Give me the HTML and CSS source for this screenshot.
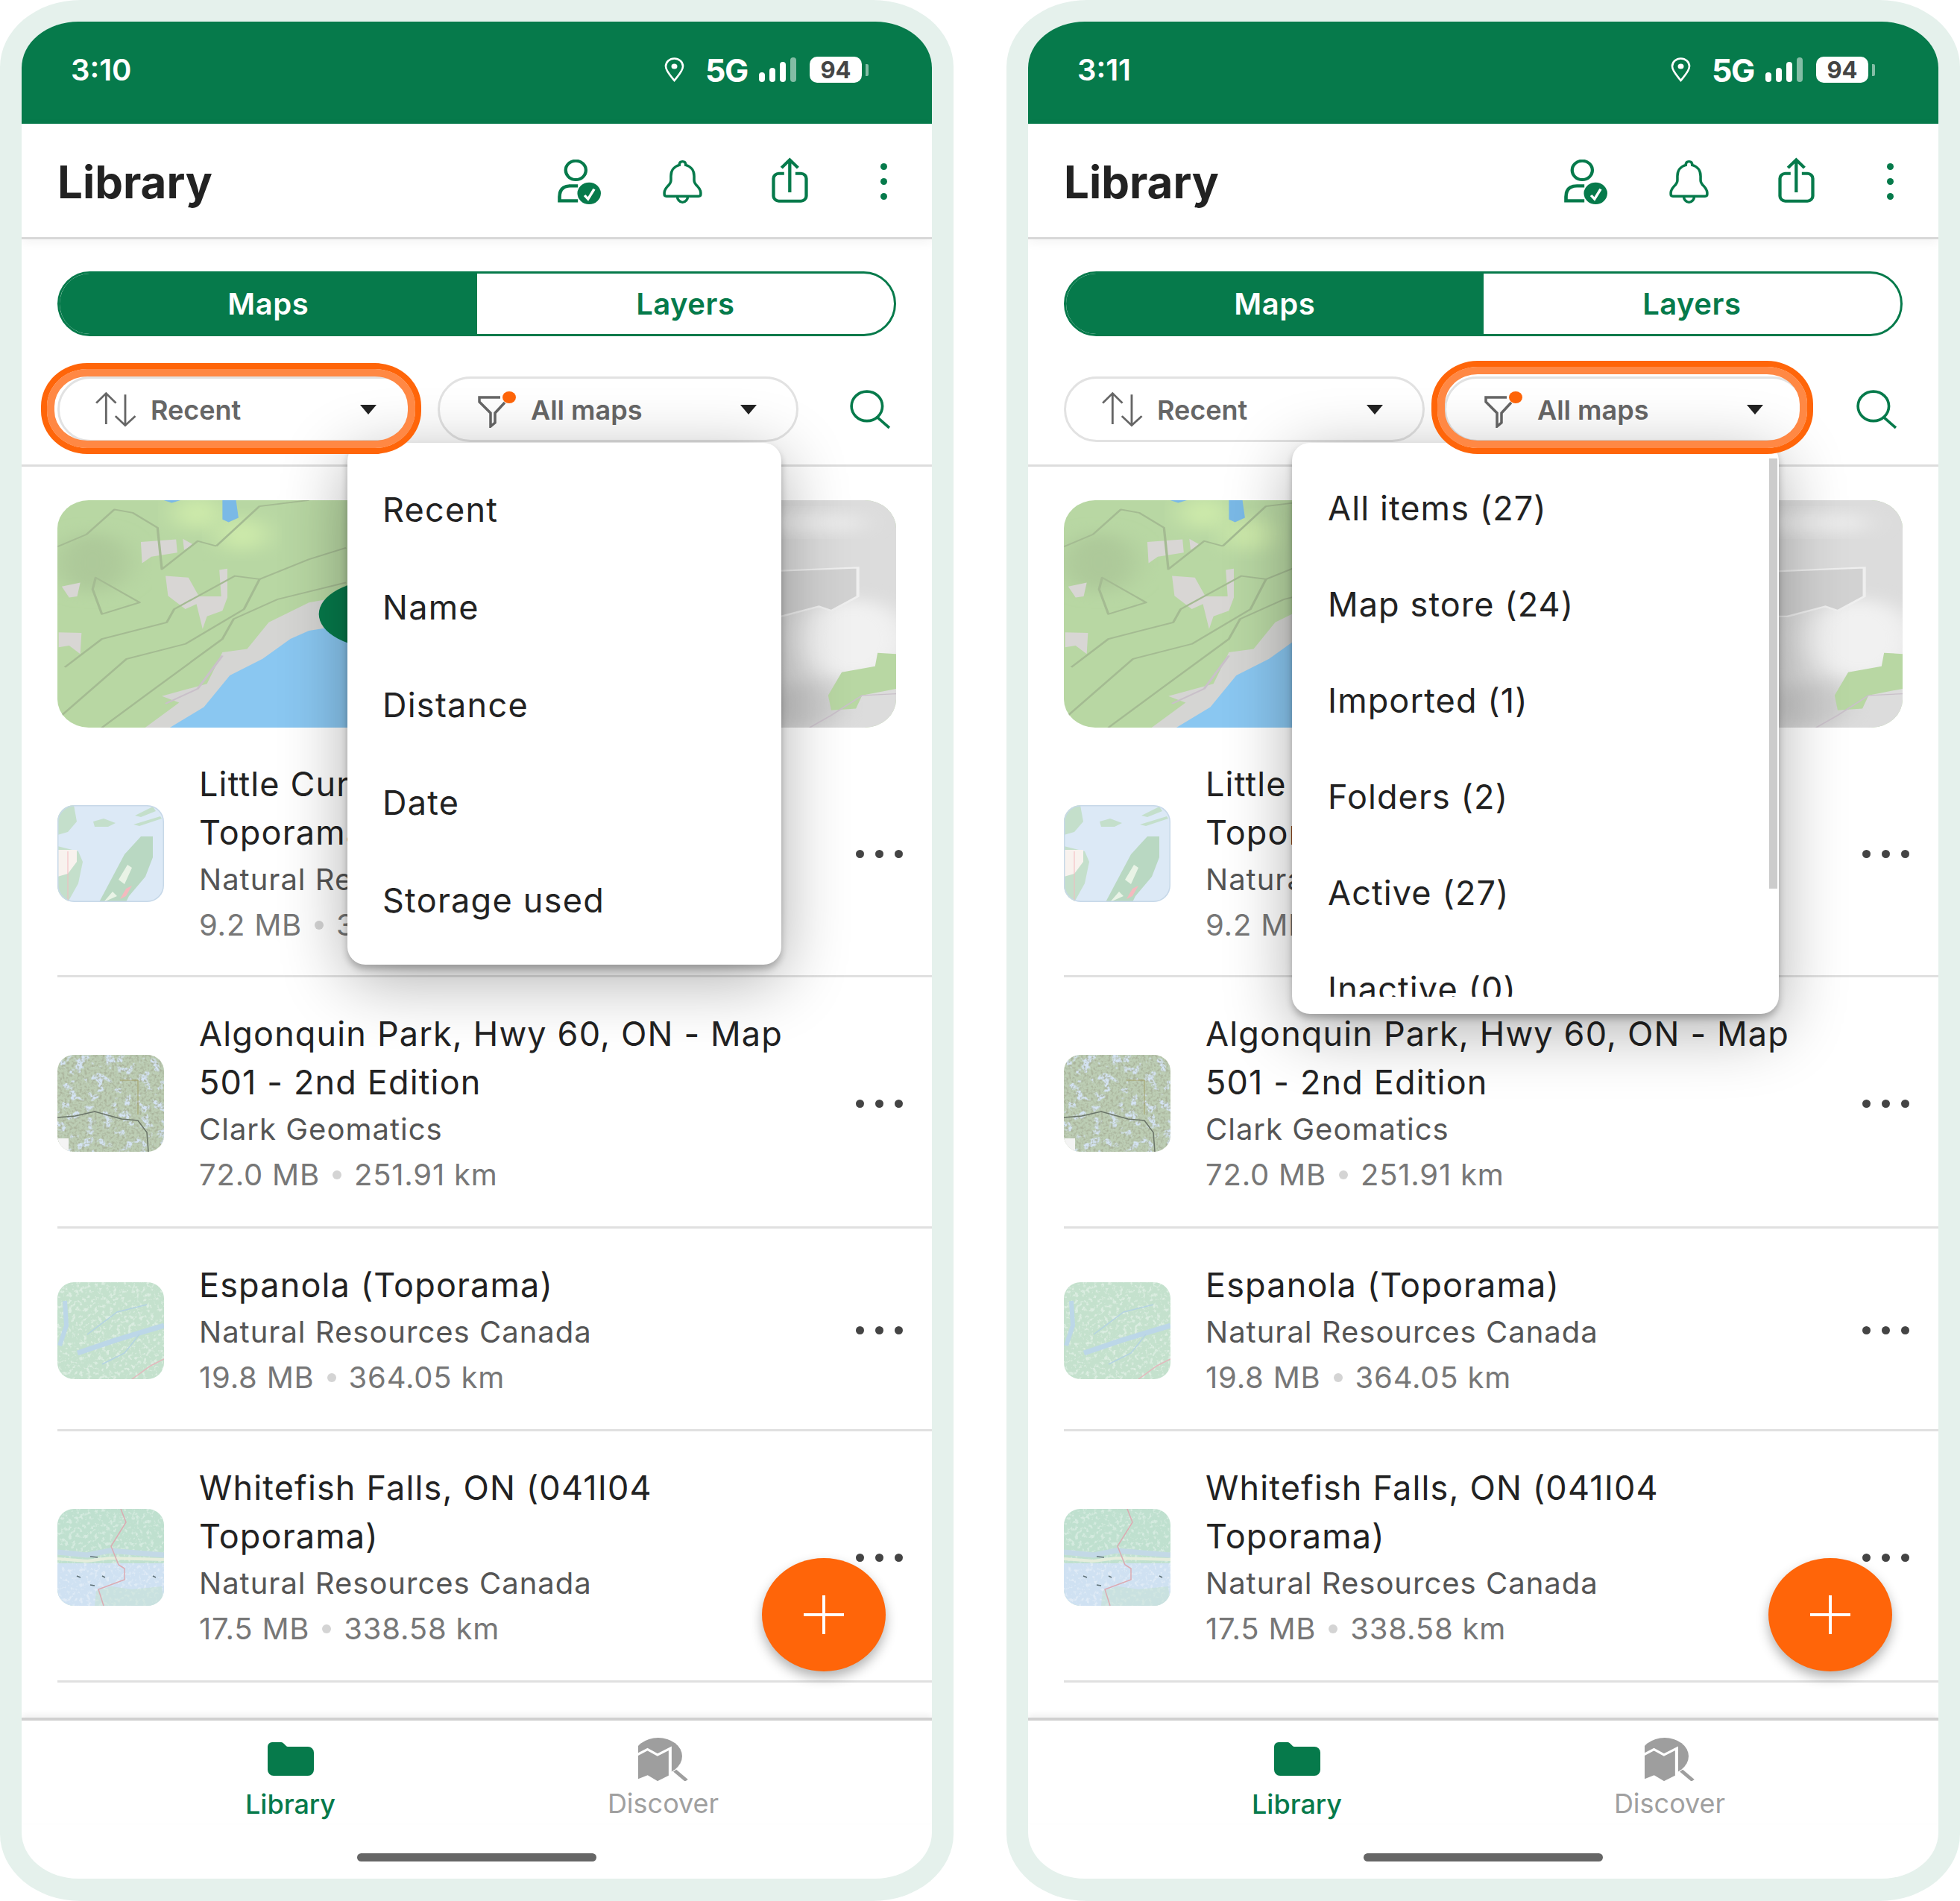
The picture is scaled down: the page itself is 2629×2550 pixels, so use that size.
FILE: index.html
```html
<!DOCTYPE html>
<html lang="en">

<head>
    <meta charset="UTF-8">
    <title>Library</title>
    <link rel="stylesheet" href="styles.css">
</head>

<body>

    <!-- shared drawings, used by both phones -->
    <svg class="defs" aria-hidden="true">
        <defs>
            <filter id="fineNoise" x="0" y="0" width="100%" height="100%">
                <feTurbulence type="fractalNoise" baseFrequency="0.3" numOctaves="2" seed="4" />
                <feColorMatrix values="0 0 0 0 .4  0 0 0 0 .45  0 0 0 0 .33  3 0 0 0 -1.3" />
            </filter>
            <filter id="lightNoise" x="0" y="0" width="100%" height="100%">
                <feTurbulence type="fractalNoise" baseFrequency="0.2" numOctaves="3" seed="9" />
                <feColorMatrix values="0 0 0 0 1  0 0 0 0 1  0 0 0 0 1  5 0 0 0 -2.6" />
            </filter>
            <filter id="waterNoise" x="0" y="0" width="100%" height="100%">
                <feTurbulence type="fractalNoise" baseFrequency="0.08" numOctaves="3" seed="12" />
                <feColorMatrix values="0 0 0 0 .66  0 0 0 0 .77  0 0 0 0 .9  9 0 0 0 -5" />
            </filter>
            <filter id="soft" x="-30%" y="-30%" width="160%" height="160%">
                <feGaussianBlur stdDeviation="22" />
            </filter>

            <symbol id="banner" viewBox="93 112 1357 685" preserveAspectRatio="none">
                <rect x="93" y="112" width="1357" height="685" fill="#b8d7a3" />
                <ellipse cx="320" cy="150" rx="40" ry="50" fill="#cdeaaa" filter="url(#soft)" />
                <ellipse cx="392" cy="215" rx="40" ry="50" fill="#cdeaaa" filter="url(#soft)" />
                <ellipse cx="150" cy="300" rx="60" ry="90" fill="#adc99a" filter="url(#soft)" />

                <path d="M235 797 L290 722 L262 702 L335 665 L360 570 L400 560 L435 480 L500 420 L620 380 L1000 380 V797Z" fill="#d5d5d3" />
                <path d="M275 797 L330 735 L372 640 L425 590 L470 530 L500 505 L620 470 L1000 470 V797Z" fill="#8ac7f1" />
                <path d="M360 112 L382 112 L386 165 L370 178 L360 170Z" fill="#7ab9e6" />
                <path d="M265 112 H292 L278 120Z" fill="#7ab9e6" />

                <g fill="#d8d6d4">
                    <path d="M228 238 L285 230 L287 270 L245 282 L230 302Z" />
                    <path d="M296 228 L313 246 L298 262Z" />
                    <path d="M268 340 L305 345 L322 402 L358 402 L355 322 L368 318 L368 405 L360 445 L335 462 L328 500 L318 425 L300 440 L272 400Z" />
                    <path d="M100 372 L130 360 L125 402 L112 405Z" />
                    <path d="M95 510 L132 512 L130 575 L112 550 L95 555Z" />
                </g>

                <g fill="none" stroke="#a4bb92" stroke-width="4" stroke-linejoin="round">
                    <path d="M93 252 L140 215 L185 140 L215 150 L255 195 L262 320 L320 235 L350 250" />
                    <path d="M105 615 L165 530 L270 480 L282 440 L380 340 L420 350 L500 290 L560 255" />
                    <path d="M100 760 L205 590 L300 545 L395 440 L420 350" />
                    <path d="M165 797 L250 680 L360 530 L378 470 L450 410 L560 360" />
                    <path d="M155 345 L226 420 L165 455 L150 380Z" />
                    <path d="M350 250 L420 130 L500 112" />
                    <path d="M268 725 L320 680 L360 580" stroke="#c9c0c9" />
                </g>

                <rect x="1000" y="112" width="450" height="685" fill="#dcdcdc" />
                <ellipse cx="1380" cy="530" rx="90" ry="120" fill="#f1f1f1" filter="url(#soft)" />
                <ellipse cx="1300" cy="180" rx="100" ry="30" fill="#ededed" filter="url(#soft)" />
                <ellipse cx="1300" cy="730" rx="60" ry="70" fill="#cbcbcb" filter="url(#soft)" />
                <path d="M1000 345 L1388 315 V402 L1345 445 L1325 432 L1264 462 H1000Z" fill="#d2d2d2" stroke="#efefef" stroke-width="5" />
                <path d="M1450 575 L1420 572 L1416 612 L1362 630 L1340 700 L1345 745 L1385 740 L1395 700 L1450 680Z" fill="#b8d7a3" />
                <path d="M1310 797 L1345 760 L1395 700 L1450 695" fill="none" stroke="#c9c0c9" stroke-width="3" />

                <circle cx="620" cy="455" r="104" fill="#067a4b" />
            </symbol>

            <symbol id="thumbLake" viewBox="0 0 143 130" preserveAspectRatio="none">
                <rect width="143" height="130" fill="#dce9f6" />
                <path d="M0 0 H22 L26 22 L14 36 L0 40Z" fill="#c4dfcb" />
                <path d="M48 22 L62 18 L78 24 L68 29 L50 29Z" fill="#c4dfcb" />
                <path d="M104 14 L128 2 L132 8 L112 16Z M102 26 L138 15 L140 18 L110 28Z" fill="#c4dfcb" />
                <path d="M0 55 L28 62 L34 76 L28 105 L14 130 H0Z" fill="#c4dfcb" />
                <path d="M0 60 H26 V76 L14 92 L0 96Z" fill="#f8f2ee" />
                <path d="M56 130 L90 66 L112 42 L128 42 L128 70 L118 96 L96 122 L92 130Z" fill="#b9d8c2" />
                <path d="M84 126 L92 112 L100 108 L92 122Z" fill="#f4b9be" />
                <path d="M82 100 L94 80 L100 84 L90 106Z M62 130 L74 116 L80 122Z" fill="#e9f3e6" />
                <path d="M14 62 V130" stroke="#f4b9be" stroke-width="1" />
                <rect x="0.75" y="0.75" width="141.5" height="128.5" rx="22" fill="none" stroke="#c7d8e8" stroke-width="1.5" />
            </symbol>

            <symbol id="thumbDense" viewBox="0 0 143 130" preserveAspectRatio="none">
                <rect width="143" height="130" fill="#bccdb4" />
                <rect width="143" height="130" filter="url(#waterNoise)" />
                <rect width="143" height="130" filter="url(#fineNoise)" />
                <path d="M0 84 L24 82 L50 76 L86 86 L108 88 L120 104 L122 130" fill="none" stroke="#6a7468" stroke-width="1.5" />
                <path d="M84 34 H108 V80" fill="none" stroke="#a19c62" stroke-width="1" />
                <rect x="0" y="112" width="15" height="18" fill="#f4f4f4" />
            </symbol>

            <symbol id="thumbPale" viewBox="0 0 143 130" preserveAspectRatio="none">
                <rect width="143" height="130" fill="#c4e1cd" />
                <rect width="143" height="130" filter="url(#lightNoise)" opacity=".4" />
                <path d="M27 95 L77 78 L143 58" fill="none" stroke="#bcd7e8" stroke-width="7" />
                <path d="M3 85 L12 58 L10 25" fill="none" stroke="#bcd7e8" stroke-width="6" />
                <path d="M40 70 L80 40 L120 30 M60 110 L90 95 L110 70" fill="none" stroke="#b4d3e2" stroke-width="1.5" />
                <path d="M100 130 L125 112 L143 103" fill="none" stroke="#e3b8bd" stroke-width="1.5" />
            </symbol>

            <symbol id="thumbMixed" viewBox="0 0 143 130" preserveAspectRatio="none">
                <rect width="143" height="130" fill="#bfe0cf" />
                <rect y="73" width="143" height="57" fill="#cfe1f2" />
                <rect width="143" height="130" filter="url(#lightNoise)" opacity=".35" />
                <path d="M0 58 L40 62 L70 56 L143 62" stroke="#c3d9e6" stroke-width="7" fill="none" />
                <path d="M0 67 L40 70 L70 66 L143 68" stroke="#e4eddc" stroke-width="4" fill="none" />
                <path d="M50 130 L52 110 L72 104 L100 108 L140 104 L143 130Z" fill="#c4e1cd" opacity=".5" />
                <path d="M85 0 L92 18 L72 50 L82 75 L90 80 L90 95 L55 108 L62 130" fill="none" stroke="#dcaab2" stroke-width="1.5" />
                <path d="M26 90 L31 92 M44 102 L50 103 M60 90 L64 92 M128 90 L132 92 M44 64 L54 65" stroke="#5e7076" stroke-width="1.5" />
            </symbol>

            <symbol id="iconPerson" viewBox="190 100 165 180" preserveAspectRatio="none">
                <circle cx="258" cy="143" r="38" fill="none" stroke="currentColor" stroke-width="12" />
                <path d="M266 206 H238 Q197 206 197 250 V266 H266" fill="none" stroke="currentColor" stroke-width="13" />
                <circle cx="308" cy="236" r="44" fill="currentColor" />
                <path d="M291 244 L304 259 L327 219" fill="none" stroke="#fff" stroke-width="10" />
            </symbol>

            <symbol id="iconBell" viewBox="585 103 150 172" preserveAspectRatio="none">
                <path d="M660 108 c-8 0-12 6-12 14 c-22 6-32 24-32 44 v16 c0 22-25 26-25 50 v6 c0 6 3 8 8 8 h122 c5 0 8-2 8-8 v-6 c0-24-25-28-25-50 v-16 c0-20-10-38-32-44 c0-8-4-14-12-14z" fill="none" stroke="currentColor" stroke-width="10" />
                <path d="M640 246 a20 24 0 0 0 40 0" fill="none" stroke="currentColor" stroke-width="10" />
            </symbol>

            <symbol id="iconShare" viewBox="995 90 137 182" preserveAspectRatio="none">
                <path d="M1042 155 H1022 a20 20 0 0 0 -20 20 V245 a20 20 0 0 0 20 20 H1105 a20 20 0 0 0 20-20 V175 a20 20 0 0 0 -20 -20 H1084" fill="none" stroke="currentColor" stroke-width="12" />
                <path d="M1063 230 V100 M1032 132 L1063 100 L1094 132" fill="none" stroke="currentColor" stroke-width="12" />
            </symbol>

            <symbol id="iconSort" viewBox="240 165 160 145" preserveAspectRatio="none">
                <path d="M283 298 V175 M246 212 L283 173 L320 212" fill="none" stroke="currentColor" stroke-width="8" />
                <path d="M355 178 V300 M318 265 L355 303 L393 265" fill="none" stroke="currentColor" stroke-width="8" />
            </symbol>

            <symbol id="iconFilter" viewBox="0 0 60 50">
                <path d="M30 9 H2 V15 L17 30 V48 L23 43 V30 L36 16" fill="none" stroke="currentColor" stroke-width="3.5" />
                <ellipse cx="42" cy="9" rx="9" ry="8" fill="#ff6509" />
            </symbol>

            <symbol id="iconSearch" viewBox="0 0 54 50" preserveAspectRatio="none">
                <ellipse cx="23" cy="21" rx="20" ry="19" fill="none" stroke="currentColor" stroke-width="3.5" />
                <path d="M36 35 L52 49" stroke="currentColor" stroke-width="3.5" />
            </symbol>

            <symbol id="iconPin" viewBox="0 0 27 34">
                <path d="M13.5 31 C8 24 2 18 2 12 A11.5 10.5 0 0 1 25 12 C25 18 19 24 13.5 31Z" fill="none" stroke="currentColor" stroke-width="2.6" />
                <ellipse cx="13.5" cy="12" rx="4" ry="3.6" fill="currentColor" />
            </symbol>

            <symbol id="iconFolder" viewBox="0 0 62 45" preserveAspectRatio="none">
                <path d="M6 0 H18 C22 0 24 6 27 6 H54 A8 8 0 0 1 62 14 V37 A8 8 0 0 1 54 45 H8 A8 8 0 0 1 0 37 V6 A6 6 0 0 1 6 0Z" fill="currentColor" />
            </symbol>

            <symbol id="iconDiscover" viewBox="1240 95 150 175" preserveAspectRatio="none">
                <ellipse cx="1300" cy="170" rx="72" ry="75" fill="currentColor" />
                <path d="M1350 228 L1385 268" stroke="currentColor" stroke-width="12" />
                <path d="M1234 166 L1268 142 L1298 164 L1336 138 V250 L1298 276 L1268 252 L1234 270Z" fill="currentColor" stroke="#fff" stroke-width="9" />
            </symbol>
        </defs>
    </svg>

    <div class="page">

        <!-- sort menu open -->
        <div class="phone">
            <div class="screen">
                <div class="status">
                    <span class="clock">3:10</span>
                    <div class="status-right">
                        <svg class="pin"><use href="#iconPin" /></svg>
                        <span class="net">5G</span>
                        <div class="signal"><i class="b1"></i><i class="b2"></i><i class="b3"></i><i class="b4"></i></div>
                        <span class="battery">94</span>
                        <span class="nub"></span>
                    </div>
                </div>

                <header class="header">
                    <h1>Library</h1>
                    <svg class="ic-person"><use href="#iconPerson" /></svg>
                    <svg class="ic-bell"><use href="#iconBell" /></svg>
                    <svg class="ic-share"><use href="#iconShare" /></svg>
                    <div class="kebab"><i></i><i></i><i></i></div>
                </header>

                <div class="segment">
                    <div class="seg on">Maps</div>
                    <div class="seg">Layers</div>
                </div>

                <div class="filters">
                    <div class="pill mark-sort">
                        <svg class="ic-sort"><use href="#iconSort" /></svg>
                        <span>Recent</span>
                        <i class="caret"></i>
                    </div>
                    <div class="pill">
                        <svg class="ic-filter"><use href="#iconFilter" /></svg>
                        <span>All maps</span>
                        <i class="caret"></i>
                    </div>
                    <svg class="ic-search"><use href="#iconSearch" /></svg>
                </div>

                <div class="content">
                    <svg class="banner"><use href="#banner" /></svg>

                    <div class="row first">
                        <svg class="thumb"><use href="#thumbLake" /></svg>
                        <div class="info">
                            <div class="name">Little Current, ON (041I13<br>Toporama)</div>
                            <div class="pub">Natural Resources Canada</div>
                            <div class="meta">9.2 MB<b></b>344.90 km</div>
                        </div>
                        <div class="dots"><i></i><i></i><i></i></div>
                    </div>
                    <div class="row">
                        <svg class="thumb"><use href="#thumbDense" /></svg>
                        <div class="info">
                            <div class="name">Algonquin Park, Hwy 60, ON - Map 501 - 2nd Edition</div>
                            <div class="pub">Clark Geomatics</div>
                            <div class="meta">72.0 MB<b></b>251.91 km</div>
                        </div>
                        <div class="dots"><i></i><i></i><i></i></div>
                    </div>
                    <div class="row">
                        <svg class="thumb"><use href="#thumbPale" /></svg>
                        <div class="info">
                            <div class="name">Espanola (Toporama)</div>
                            <div class="pub">Natural Resources Canada</div>
                            <div class="meta">19.8 MB<b></b>364.05 km</div>
                        </div>
                        <div class="dots"><i></i><i></i><i></i></div>
                    </div>
                    <div class="row">
                        <svg class="thumb"><use href="#thumbMixed" /></svg>
                        <div class="info">
                            <div class="name">Whitefish Falls, ON (041I04 Toporama)</div>
                            <div class="pub">Natural Resources Canada</div>
                            <div class="meta">17.5 MB<b></b>338.58 km</div>
                        </div>
                        <div class="dots"><i></i><i></i><i></i></div>
                    </div>
                </div>

                <nav class="tabs">
                    <div class="tab active">
                        <svg class="ic-folder"><use href="#iconFolder" /></svg>
                        <span>Library</span>
                    </div>
                    <div class="tab">
                        <svg class="ic-discover"><use href="#iconDiscover" /></svg>
                        <span>Discover</span>
                    </div>
                </nav>
                <div class="home"><i></i></div>

                <div class="fab"><i></i></div>

                <div class="menu menu-sort">
                    <div class="item">Recent</div>
                    <div class="item">Name</div>
                    <div class="item">Distance</div>
                    <div class="item">Date</div>
                    <div class="item">Storage used</div>
                </div>
            </div>
        </div>

        <!-- filter menu open -->
        <div class="phone">
            <div class="screen">
                <div class="status">
                    <span class="clock">3:11</span>
                    <div class="status-right">
                        <svg class="pin"><use href="#iconPin" /></svg>
                        <span class="net">5G</span>
                        <div class="signal"><i class="b1"></i><i class="b2"></i><i class="b3"></i><i class="b4"></i></div>
                        <span class="battery">94</span>
                        <span class="nub"></span>
                    </div>
                </div>

                <header class="header">
                    <h1>Library</h1>
                    <svg class="ic-person"><use href="#iconPerson" /></svg>
                    <svg class="ic-bell"><use href="#iconBell" /></svg>
                    <svg class="ic-share"><use href="#iconShare" /></svg>
                    <div class="kebab"><i></i><i></i><i></i></div>
                </header>

                <div class="segment">
                    <div class="seg on">Maps</div>
                    <div class="seg">Layers</div>
                </div>

                <div class="filters">
                    <div class="pill">
                        <svg class="ic-sort"><use href="#iconSort" /></svg>
                        <span>Recent</span>
                        <i class="caret"></i>
                    </div>
                    <div class="pill mark-filter">
                        <svg class="ic-filter"><use href="#iconFilter" /></svg>
                        <span>All maps</span>
                        <i class="caret"></i>
                    </div>
                    <svg class="ic-search"><use href="#iconSearch" /></svg>
                </div>

                <div class="content">
                    <svg class="banner"><use href="#banner" /></svg>

                    <div class="row first">
                        <svg class="thumb"><use href="#thumbLake" /></svg>
                        <div class="info">
                            <div class="name">Little Current, ON (041I13<br>Toporama)</div>
                            <div class="pub">Natural Resources Canada</div>
                            <div class="meta">9.2 MB<b></b>344.90 km</div>
                        </div>
                        <div class="dots"><i></i><i></i><i></i></div>
                    </div>
                    <div class="row">
                        <svg class="thumb"><use href="#thumbDense" /></svg>
                        <div class="info">
                            <div class="name">Algonquin Park, Hwy 60, ON - Map 501 - 2nd Edition</div>
                            <div class="pub">Clark Geomatics</div>
                            <div class="meta">72.0 MB<b></b>251.91 km</div>
                        </div>
                        <div class="dots"><i></i><i></i><i></i></div>
                    </div>
                    <div class="row">
                        <svg class="thumb"><use href="#thumbPale" /></svg>
                        <div class="info">
                            <div class="name">Espanola (Toporama)</div>
                            <div class="pub">Natural Resources Canada</div>
                            <div class="meta">19.8 MB<b></b>364.05 km</div>
                        </div>
                        <div class="dots"><i></i><i></i><i></i></div>
                    </div>
                    <div class="row">
                        <svg class="thumb"><use href="#thumbMixed" /></svg>
                        <div class="info">
                            <div class="name">Whitefish Falls, ON (041I04 Toporama)</div>
                            <div class="pub">Natural Resources Canada</div>
                            <div class="meta">17.5 MB<b></b>338.58 km</div>
                        </div>
                        <div class="dots"><i></i><i></i><i></i></div>
                    </div>
                </div>

                <nav class="tabs">
                    <div class="tab active">
                        <svg class="ic-folder"><use href="#iconFolder" /></svg>
                        <span>Library</span>
                    </div>
                    <div class="tab">
                        <svg class="ic-discover"><use href="#iconDiscover" /></svg>
                        <span>Discover</span>
                    </div>
                </nav>
                <div class="home"><i></i></div>

                <div class="fab"><i></i></div>

                <div class="menu menu-filter">
                    <div class="menu-scroll">
                        <div class="item">All items (27)</div>
                        <div class="item">Map store (24)</div>
                        <div class="item">Imported (1)</div>
                        <div class="item">Folders (2)</div>
                        <div class="item">Active (27)</div>
                        <div class="item">Inactive (0)</div>
                    </div>
                    <div class="scrollbar"></div>
                </div>
            </div>
        </div>

    </div>

</body>

</html>
```

FILE: styles.css
```css
* {
    box-sizing: border-box;
}

html,
body {
    margin: 0;
    padding: 0;
    background-color: #fff;
}

body {
    font-family: 'Inter', 'Liberation Sans', sans-serif;
    color: #222;
}

.defs {
    position: absolute;
    width: 0;
    height: 0;
}

.page {
    display: flex;
    justify-content: space-between;
    width: 2629px;
    height: 2550px;
    overflow: hidden;
}

/* phone frame */
.phone {
    width: 1279px;
    height: 2550px;
    padding: 29px;
    background-color: #e5f1ec;
    border-radius: 108px / 90px;
}

.screen {
    position: relative;
    display: flex;
    flex-direction: column;
    width: 1221px;
    height: 2491px;
    overflow: hidden;
    background-color: #fff;
    border-radius: 76px / 62px;
}

/* status bar */
.status {
    display: flex;
    align-items: center;
    justify-content: space-between;
    flex: none;
    height: 137px;
    padding: 0 85px 8px 66px;
    background-color: #067a4b;
    color: #fff;
}

.clock {
    font-size: 40px;
    font-weight: 600;
}

.status-right {
    display: flex;
    align-items: center;
}

.pin {
    width: 27px;
    height: 34px;
    margin-right: 28px;
}

.net {
    width: 53px;
    font-size: 43px;
    font-weight: 700;
    letter-spacing: -1.5px;
    line-height: 34px;
    white-space: nowrap;
}

.signal {
    display: flex;
    align-items: flex-end;
    gap: 6px;
    height: 33px;
    margin-left: 19px;
}

.signal i {
    width: 8px;
    background-color: #fff;
    border-radius: 4px;
}

.b1 {
    height: 13px;
}

.b2 {
    height: 19px;
}

.b3 {
    height: 27px;
}

.signal .b4 {
    height: 33px;
    opacity: 0.5;
}

.battery {
    width: 70px;
    height: 35px;
    margin-left: 18px;
    background-color: #fff;
    border-radius: 10px;
    color: #444;
    font-size: 31px;
    font-weight: 700;
    line-height: 35px;
    text-align: center;
}

.nub {
    width: 4px;
    height: 16px;
    margin-left: 5px;
    background-color: rgba(255, 255, 255, 0.5);
    border-radius: 0 2px 2px 0;
}

/* header */
.header {
    display: flex;
    align-items: center;
    flex: none;
    height: 155px;
    padding: 3px 60px 0 48px;
    border-bottom: 3px solid #d8d8d8;
    box-shadow: 0 4px 14px rgba(0, 0, 0, 0.05);
    color: #067a4b;
}

.header h1 {
    margin: 0 auto 0 0;
    color: #222;
    font-size: 60px;
    font-weight: 700;
}

.ic-person {
    width: 59px;
    height: 60px;
}

.ic-bell {
    width: 53px;
    height: 58px;
    margin-left: 82px;
}

.ic-share {
    width: 49px;
    height: 61px;
    margin: -4px 0 0 93px;
}

.kebab {
    display: flex;
    flex-direction: column;
    gap: 11px;
    margin-left: 97px;
}

.kebab i {
    width: 9px;
    height: 9px;
    background-color: #067a4b;
    border-radius: 50%;
}

/* maps / layers switch */
.segment {
    display: flex;
    flex: none;
    height: 87px;
    margin: 43px 48px 0;
    overflow: hidden;
    border: 3px solid #067a4b;
    border-radius: 44px;
}

.seg {
    flex: 1;
    color: #067a4b;
    font-size: 40px;
    font-weight: 600;
    letter-spacing: 0.5px;
    line-height: 81px;
    text-align: center;
}

.seg.on {
    background-color: #067a4b;
    color: #fff;
}

/* sort and filter row */
.filters {
    display: flex;
    align-items: center;
    flex: none;
    height: 120px;
    padding: 0 0 32px 48px;
    margin-top: 55px;
    border-bottom: 3px solid #ddd;
}

.pill {
    position: relative;
    display: flex;
    align-items: center;
    width: 484px;
    height: 88px;
    padding: 0 53px 0 47px;
    margin-right: 26px;
    border: 3px solid #e2e2e2;
    border-radius: 44px;
    color: #666;
    font-size: 36px;
    font-weight: 600;
}

.pill span {
    padding-top: 2px;
}

.caret {
    width: 0;
    height: 0;
    margin-top: 2px;
    margin-left: auto;
    border-top: 13px solid #222;
    border-right: 11px solid transparent;
    border-left: 11px solid transparent;
}

.ic-sort {
    width: 57px;
    height: 48px;
    margin-right: 18px;
}

.ic-filter {
    width: 60px;
    height: 50px;
    margin-right: 11px;
    margin-left: 4px;
}

.ic-search {
    width: 56px;
    height: 52px;
    margin-left: 42px;
    color: #067a4b;
}

/* orange call-out round the pill */
.mark-sort::after,
.mark-filter::after {
    content: "";
    position: absolute;
    z-index: 5;
    border: 8px solid #ff6509;
    border-radius: 62px / 58px;
    box-shadow: inset 0 0 0 10px #ff8844;
}

.mark-sort::after {
    inset: -21px -7px -19px -25px;
}

.mark-filter::after {
    inset: -24px -14px -19px -20px;
}

/* list */
.content {
    flex: 1;
    min-height: 0;
    padding: 45px 0 0 48px;
}

.banner {
    display: block;
    width: 1125px;
    height: 305px;
    border-radius: 42px / 38px;
}

.row {
    display: flex;
    align-items: center;
    padding: 43px 39px 39px 0;
    border-bottom: 3px solid #e0e0e0;
}

.row.first {
    padding-top: 43px;
    padding-bottom: 37px;
}

.thumb {
    flex: none;
    width: 143px;
    height: 130px;
    margin-right: 47px;
    border-radius: 22px;
}

.info {
    flex: none;
    width: 826px;
}

.name {
    font-size: 45px;
    letter-spacing: 1.15px;
    line-height: 65px;
}

.pub {
    color: #555;
    font-size: 40px;
    letter-spacing: 1px;
    line-height: 62px;
}

.meta {
    display: flex;
    align-items: center;
    color: #777;
    font-size: 40px;
    letter-spacing: 0.8px;
    line-height: 60px;
}

.meta b {
    width: 12px;
    height: 12px;
    margin: 0 17px;
    background-color: #d4d4d4;
    border-radius: 50%;
}

.dots {
    display: flex;
    gap: 15px;
    margin-left: auto;
}

.dots i {
    width: 11px;
    height: 11px;
    background-color: #444;
    border-radius: 50%;
}

/* bottom bar */
.tabs {
    display: flex;
    justify-content: center;
    flex: none;
    height: 142px;
    border-top: 4px solid #d0d0d0;
    box-shadow: 0 -4px 8px rgba(0, 0, 0, 0.06);
}

.tab {
    display: flex;
    flex-direction: column;
    align-items: center;
    width: 500px;
    color: #a0a0a0;
    font-size: 36px;
}

.tab.active {
    color: #067a4b;
    font-weight: 500;
}

.ic-folder {
    width: 62px;
    height: 45px;
    margin-top: 29px;
}

.ic-discover {
    width: 67px;
    height: 58px;
    margin-top: 23px;
    margin-bottom: -8px;
    color: #9e9e9e;
}

.tab span {
    margin-top: 16px;
}

.home {
    display: flex;
    justify-content: center;
    flex: none;
    height: 74px;
    padding-top: 40px;
}

.home i {
    width: 321px;
    height: 11px;
    background-color: #666;
    border-radius: 6px;
}

/* add button */
.fab {
    position: absolute;
    top: 2061px;
    left: 993px;
    display: flex;
    align-items: center;
    justify-content: center;
    width: 166px;
    height: 152px;
    background-color: #ff6509;
    border-radius: 50%;
    box-shadow: 0 8px 16px rgba(0, 0, 0, 0.3);
}

.fab i {
    position: relative;
    width: 54px;
    height: 4px;
    background-color: #fff;
}

.fab i::after {
    content: "";
    position: absolute;
    top: -24px;
    left: 25px;
    width: 4px;
    height: 52px;
    background-color: #fff;
}

/* open menus */
.menu {
    position: absolute;
    top: 565px;
    z-index: 3;
    background-color: #fff;
    border-radius: 24px;
    box-shadow: 0 6px 10px rgba(0, 0, 0, 0.25), 0 20px 90px rgba(0, 0, 0, 0.32);
    font-size: 45px;
    letter-spacing: 1.25px;
}

.menu-sort {
    left: 437px;
    width: 582px;
    height: 700px;
    padding-top: 24px;
}

.menu-sort .item {
    height: 131px;
    padding-left: 47px;
    line-height: 131px;
}

.menu-filter {
    left: 354px;
    width: 653px;
    height: 766px;
    padding-top: 23px;
    letter-spacing: 1.1px;
}

.menu-scroll {
    height: 720px;
    overflow: hidden;
}

.menu-filter .item {
    height: 129px;
    padding-left: 48px;
    line-height: 129px;
}

.scrollbar {
    position: absolute;
    top: 21px;
    right: 2px;
    width: 11px;
    height: 577px;
    background-color: #ccc;
}
```
